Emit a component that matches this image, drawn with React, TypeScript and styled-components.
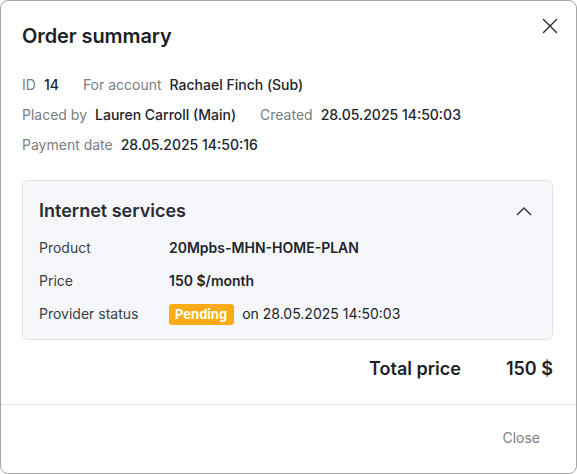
import React from "react";
import styled, { createGlobalStyle } from "styled-components";

const Global = createGlobalStyle`
  html, body { margin: 0; padding: 0; background: #ffffff; }
  body { font-family: Inter, "Noto Sans", sans-serif; -webkit-font-smoothing: antialiased; }
  * { box-sizing: border-box; }
`;

const Dialog = styled.div`
  width: 577px;
  height: 474px;
  border: 1px solid #a6a6a6;
  border-radius: 8px;
  background: #fff;
  display: flex;
  flex-direction: column;
  position: relative;
  overflow: hidden;
`;

const Body = styled.div`
  padding: 21px 23px 0 21px;
  display: flex;
  flex-direction: column;
`;

const Title = styled.h2`
  margin: 0;
  font-size: 20px;
  line-height: 28px;
  font-weight: 600;
  color: #1d1f24;
  letter-spacing: -0.1px;
`;

const CloseIcon = styled.button`
  position: absolute;
  top: 15px;
  right: 16px;
  width: 20px;
  height: 20px;
  padding: 0;
  border: 0;
  background: transparent;
  display: flex;
  align-items: center;
  justify-content: center;
  color: #2a2c31;
  cursor: pointer;
`;

const Meta = styled.div`
  margin-top: 25px;
  display: flex;
  flex-direction: column;
  gap: 10px;
`;

const MetaRow = styled.div`
  display: flex;
  gap: 24px;
  font-size: 14px;
  line-height: 20px;
`;

const Pair = styled.div`
  display: flex;
  gap: 8px;
`;

const MetaLabel = styled.span`
  color: #7a7e86;
`;

const MetaValue = styled.span`
  color: #22242a;
  font-weight: 500;
`;

const Card = styled.section`
  margin-top: 25px;
  background: #f6f7fb;
  border: 1px solid #e1e3ea;
  border-radius: 6px;
  padding: 17px 16px 14px 16px;
  display: flex;
  flex-direction: column;
`;

const CardHeader = styled.div`
  display: flex;
  align-items: center;
  justify-content: space-between;
  height: 26px;
`;

const CardTitle = styled.h3`
  margin: 0;
  font-size: 18px;
  line-height: 26px;
  font-weight: 600;
  color: #2a2c31;
`;

const Chevron = styled.span`
  display: flex;
  color: #3a3c42;
  margin-right: 4px;
`;

const Rows = styled.div`
  margin-top: 13px;
  display: flex;
  flex-direction: column;
  gap: 11px;
`;

const Row = styled.div`
  display: grid;
  grid-template-columns: 130px 1fr;
  align-items: center;
  min-height: 22px;
  font-size: 14px;
  line-height: 20px;
`;

const RowLabel = styled.span`
  color: #3b3e45;
`;

const RowValue = styled.span<{ $strong?: boolean }>`
  color: #22242a;
  font-weight: ${(p) => (p.$strong ? 600 : 400)};
  display: flex;
  align-items: center;
  gap: 8px;
`;

const Badge = styled.span`
  background: #fbab16;
  color: #fff;
  font-weight: 700;
  font-size: 13px;
  line-height: 21px;
  height: 21px;
  padding: 0 7px 0 6px;
  border-radius: 3px;
`;

const Total = styled.div`
  margin-top: 16px;
  display: flex;
  justify-content: flex-end;
  gap: 45px;
  font-size: 18px;
  line-height: 26px;
  font-weight: 600;
  color: #1d1f24;
  padding-bottom: 22px;
`;

const Footer = styled.footer`
  border-top: 1px solid #e6e7eb;
  flex: 1;
  display: flex;
  align-items: center;
  justify-content: flex-end;
  padding: 0 24px 3px 0;
`;

const CloseButton = styled.button`
  border: 0;
  background: transparent;
  font-family: inherit;
  font-size: 14px;
  line-height: 20px;
  color: #7a7e86;
  padding: 6px 12px;
  cursor: pointer;
`;

export default function App() {
  return (
    <>
      <Global />
      <Dialog>
        <CloseIcon aria-label="Close">
          <svg width="16" height="16" viewBox="0 0 16 16" fill="none" stroke="currentColor" strokeWidth="1.4" strokeLinecap="round">
            <path d="M1.5 1.5 L14.5 14.5 M14.5 1.5 L1.5 14.5" />
          </svg>
        </CloseIcon>
        <Body>
          <Title>Order summary</Title>
          <Meta>
            <MetaRow>
              <Pair>
                <MetaLabel>ID</MetaLabel>
                <MetaValue>14</MetaValue>
              </Pair>
              <Pair>
                <MetaLabel>For account</MetaLabel>
                <MetaValue>Rachael Finch (Sub)</MetaValue>
              </Pair>
            </MetaRow>
            <MetaRow>
              <Pair>
                <MetaLabel>Placed by</MetaLabel>
                <MetaValue>Lauren Carroll (Main)</MetaValue>
              </Pair>
              <Pair>
                <MetaLabel>Created</MetaLabel>
                <MetaValue>28.05.2025 14:50:03</MetaValue>
              </Pair>
            </MetaRow>
            <MetaRow>
              <Pair>
                <MetaLabel>Payment date</MetaLabel>
                <MetaValue>28.05.2025 14:50:16</MetaValue>
              </Pair>
            </MetaRow>
          </Meta>
          <Card>
            <CardHeader>
              <CardTitle>Internet services</CardTitle>
              <Chevron>
                <svg width="16" height="10" viewBox="0 0 16 10" fill="none" stroke="currentColor" strokeWidth="1.5" strokeLinecap="round" strokeLinejoin="round">
                  <path d="M1.5 8.5 L8 2 L14.5 8.5" />
                </svg>
              </Chevron>
            </CardHeader>
            <Rows>
              <Row>
                <RowLabel>Product</RowLabel>
                <RowValue $strong>20Mpbs-MHN-HOME-PLAN</RowValue>
              </Row>
              <Row>
                <RowLabel>Price</RowLabel>
                <RowValue $strong>150 $/month</RowValue>
              </Row>
              <Row>
                <RowLabel>Provider status</RowLabel>
                <RowValue>
                  <Badge>Pending</Badge>
                  on 28.05.2025 14:50:03
                </RowValue>
              </Row>
            </Rows>
          </Card>
          <Total>
            <span>Total price</span>
            <span>150 $</span>
          </Total>
        </Body>
        <Footer>
          <CloseButton>Close</CloseButton>
        </Footer>
      </Dialog>
    </>
  );
}
